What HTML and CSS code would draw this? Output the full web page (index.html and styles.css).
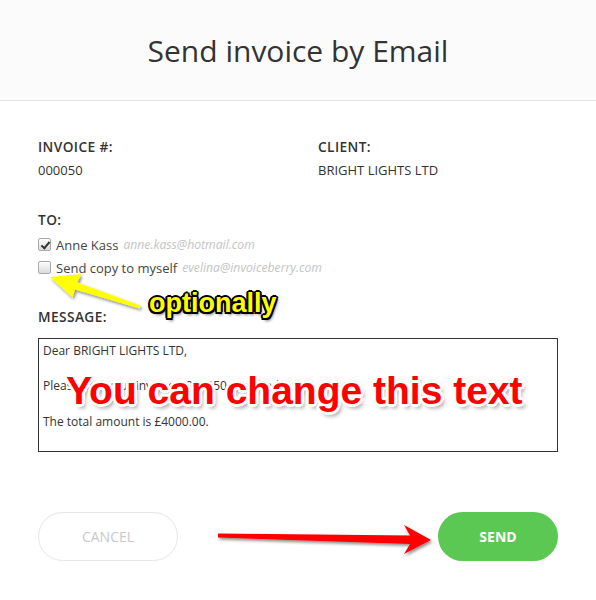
FILE: index.html
```html
<!DOCTYPE html>
<html lang="en">
<head>
  <meta charset="UTF-8" />
  <title>Send invoice by Email</title>
  <link rel="stylesheet" href="styles.css">
</head>
<body>

  <div class="modal">
    <div class="modal-header">
      <h2>Send invoice by Email</h2>
    </div>

    <div class="modal-body">
      <div class="info-grid">
        <div class="field">
          <div class="label">Invoice #:</div>
          <div class="value">000050</div>
        </div>
        <div class="field">
          <div class="label">Client:</div>
          <div class="value">BRIGHT LIGHTS LTD</div>
        </div>
      </div>

      <div class="label to-label">To:</div>
      <label class="check-row">
        <span class="check checked"></span>
        <span class="name">Anne Kass</span>
        <span class="email">anne.kass@hotmail.com</span>
      </label>
      <label class="check-row">
        <span class="check"></span>
        <span class="name">Send copy to myself</span>
        <span class="email">evelina@invoiceberry.com</span>
      </label>

      <div class="label msg-label">Message:</div>
      <textarea class="message">Dear BRIGHT LIGHTS LTD,

Please find your invoice #000050 attached.

The total amount is £4000.00.</textarea>

      <div class="actions">
        <button class="btn cancel-btn">Cancel</button>
        <button class="btn send-btn">Send</button>
      </div>
    </div>
  </div>

  <!-- annotations drawn over the screenshot -->
  <svg class="arrows" width="596" height="600" viewBox="0 0 596 600">
    <defs>
      <filter id="shadow" x="-10%" y="-50%" width="120%" height="200%">
        <feDropShadow dx="1.5" dy="2" stdDeviation="1.5" flood-color="#000" flood-opacity="0.45"/>
      </filter>
    </defs>
    <polygon fill="#ffff00" filter="url(#shadow)"
      points="50,277 81,274 77.5,282.5 140.5,305.5 139.5,308.5 75,289.5 72.5,297.5"/>
    <polygon fill="#ff0000" filter="url(#shadow)"
      points="218,533.5 410,535.5 404,525 431,540 404,554 410,544 218,537.5"/>
  </svg>
  <div class="note note-optional">optionally</div>
  <div class="note note-change">You can change this text</div>

</body>
</html>
```

FILE: styles.css
```css
* { box-sizing: border-box; margin: 0; padding: 0; }

body {
  width: 596px;
  height: 600px;
  background: #fff;
  font-family: "Open Sans", sans-serif;
  color: #333;
  position: relative;
  overflow: hidden;
}

.modal-header {
  height: 101px;
  background: #fbfbfb;
  border-bottom: 1px solid #e6e6e6;
  display: flex;
  align-items: center;
  justify-content: center;
}

.modal-header h2 {
  font-size: 30px;
  font-weight: 400;
  color: #333;
}

.modal-body {
  padding: 36px 38px 0;
}

.info-grid {
  display: grid;
  grid-template-columns: 280px 1fr;
}

.label {
  font-size: 13.7px;
  font-weight: 600;
  text-transform: uppercase;
  letter-spacing: 0.4px;
  line-height: 20px;
  color: #333;
}

.value {
  font-size: 13px;
  line-height: 20px;
  margin-top: 3px;
  color: #333;
}

.to-label { margin-top: 30px; }

.check-row {
  display: flex;
  align-items: center;
  gap: 5px;
  height: 23px;
  font-size: 13px;
}

.to-label + .check-row { margin-top: 3px; }

.check {
  width: 13px;
  height: 13px;
  border: 1px solid #a9a9a9;
  border-radius: 2px;
  background: linear-gradient(#fcfcfc, #dcdcdc);
  position: relative;
  flex: none;
}

.check.checked::after {
  content: "";
  position: absolute;
  left: 3.5px;
  top: 0.5px;
  width: 3px;
  height: 7px;
  border: solid #333;
  border-width: 0 2px 2px 0;
  transform: rotate(40deg);
}

.name { color: #444; }

.email {
  color: #c4c4c4;
  font-style: italic;
  font-size: 12.2px;
}

.msg-label { margin-top: 28px; }

.message {
  display: block;
  width: 520px;
  height: 114px;
  margin-top: 11px;
  border: 1px solid #2f3337;
  padding: 3px 4px;
  font-family: "Open Sans", sans-serif;
  font-size: 12px;
  line-height: 17.7px;
  color: #333;
  resize: none;
  outline: none;
}

.actions {
  display: flex;
  justify-content: space-between;
  margin-top: 60px;
}

.btn {
  height: 49px;
  border-radius: 25px;
  font-family: "Open Sans", sans-serif;
  font-size: 14px;
  text-transform: uppercase;
  cursor: pointer;
}

.cancel-btn {
  width: 140px;
  background: #fff;
  border: 1px solid #e6e6e6;
  color: #c9c9c9;
}

.send-btn {
  width: 120px;
  background: #5bc854;
  border: none;
  color: #fff;
  font-weight: 700;
}

/* annotations */
.arrows {
  position: absolute;
  left: 0;
  top: 0;
  pointer-events: none;
}

.note {
  position: absolute;
  font-family: "Liberation Sans", Arial, sans-serif;
  font-weight: 700;
  white-space: nowrap;
  pointer-events: none;
}

.note-optional {
  left: 149px;
  top: 288px;
  font-size: 27px;
  color: #ffff00;
  text-shadow:
    -1.5px -1.5px 0 #000, 1.5px -1.5px 0 #000, -1.5px 1.5px 0 #000, 1.5px 1.5px 0 #000,
    0 -2px 0 #000, 0 2px 0 #000, -2px 0 0 #000, 2px 0 0 #000,
    2px 3px 3px rgba(0, 0, 0, 0.5);
}

.note-change {
  left: 66px;
  top: 369px;
  font-size: 39px;
  color: #ff0000;
  text-shadow:
    -2px -2px 0 #fff, 2px -2px 0 #fff, -2px 2px 0 #fff, 2px 2px 0 #fff,
    0 -3px 0 #fff, 0 3px 0 #fff, -3px 0 0 #fff, 3px 0 0 #fff,
    3px 4px 4px rgba(0, 0, 0, 0.4);
}
```
